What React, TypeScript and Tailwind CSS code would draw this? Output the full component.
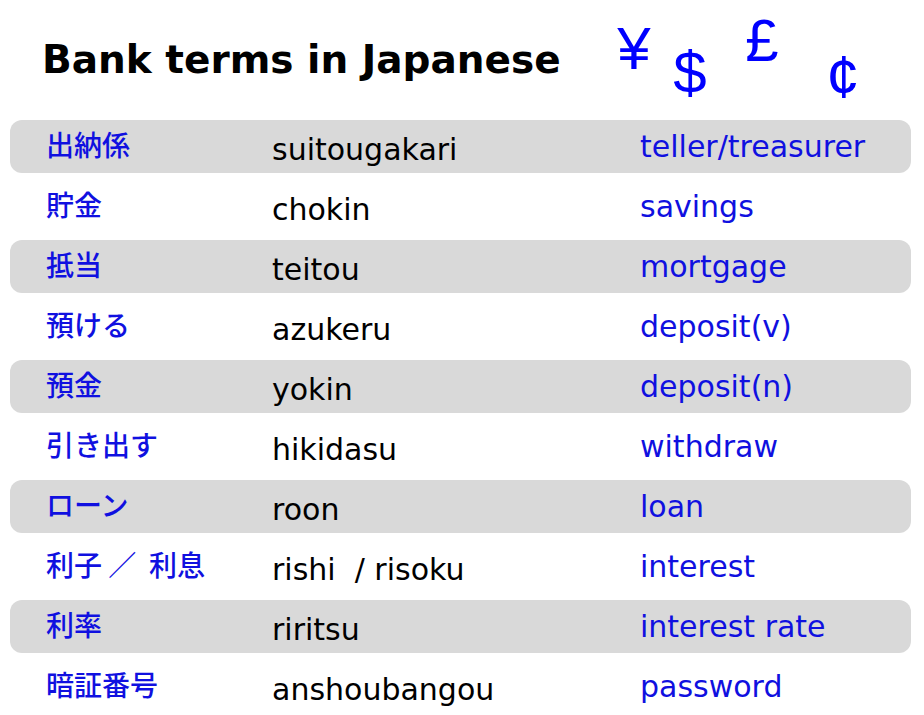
import React from "react";

const rows = [
  { jp: "出納係", ro: "suitougakari", en: "teller/treasurer" },
  { jp: "貯金", ro: "chokin", en: "savings" },
  { jp: "抵当", ro: "teitou", en: "mortgage" },
  { jp: "預ける", ro: "azukeru", en: "deposit(v)" },
  { jp: "預金", ro: "yokin", en: "deposit(n)" },
  { jp: "引き出す", ro: "hikidasu", en: "withdraw" },
  { jp: "ローン", ro: "roon", en: "loan" },
  { jp: "利子 ／  利息", ro: "rishi  / risoku", en: "interest" },
  { jp: "利率", ro: "riritsu", en: "interest rate" },
  { jp: "暗証番号", ro: "anshoubangou", en: "password" },
];

export default function App() {
  return (
    <div className="w-[924px] h-[715px] bg-white overflow-hidden">
      {/* header */}
      <div className="h-[120px] flex items-start">
        <div className="w-[604px] pl-[42px] pt-[40px]">
          <h1 className="text-[39px] leading-none font-bold text-black font-['DejaVu_Sans',sans-serif]">
            Bank terms in Japanese
          </h1>
        </div>
        <div className="flex items-start text-[#0000ff] text-[60px] leading-none font-['Liberation_Sans',Arial,sans-serif]">
          <span className="w-[60px] text-center mt-[19px]">¥</span>
          <span className="w-[52px] text-center mt-[43px]">$</span>
          <span className="w-[92px] text-center mt-[11px]">£</span>
          <span className="w-[70px] text-center mt-[47px]">¢</span>
        </div>
      </div>

      {/* term list */}
      <div className="pl-[10px] pr-[13px]">
        {rows.map((r, i) => (
          <div
            key={r.ro}
            className={`h-[53px] mb-[7px] rounded-[12px] pl-[36px] grid grid-cols-[226px_368px_1fr] ${
              i % 2 === 0 ? "bg-[#d9d9d9]" : ""
            }`}
          >
            <div className="pt-[10px] text-[28px] leading-[28px] font-medium text-[#1010e0] whitespace-pre font-['Noto_Sans_CJK_JP',sans-serif]">
              {r.jp}
            </div>
            <div className="pt-[15px] text-[30px] leading-[30px] text-black whitespace-pre font-['DejaVu_Sans',sans-serif]">
              {r.ro}
            </div>
            <div className="pt-[12px] text-[30px] leading-[30px] text-[#1010e0] whitespace-pre font-['DejaVu_Sans',sans-serif]">
              {r.en}
            </div>
          </div>
        ))}
      </div>
    </div>
  );
}
